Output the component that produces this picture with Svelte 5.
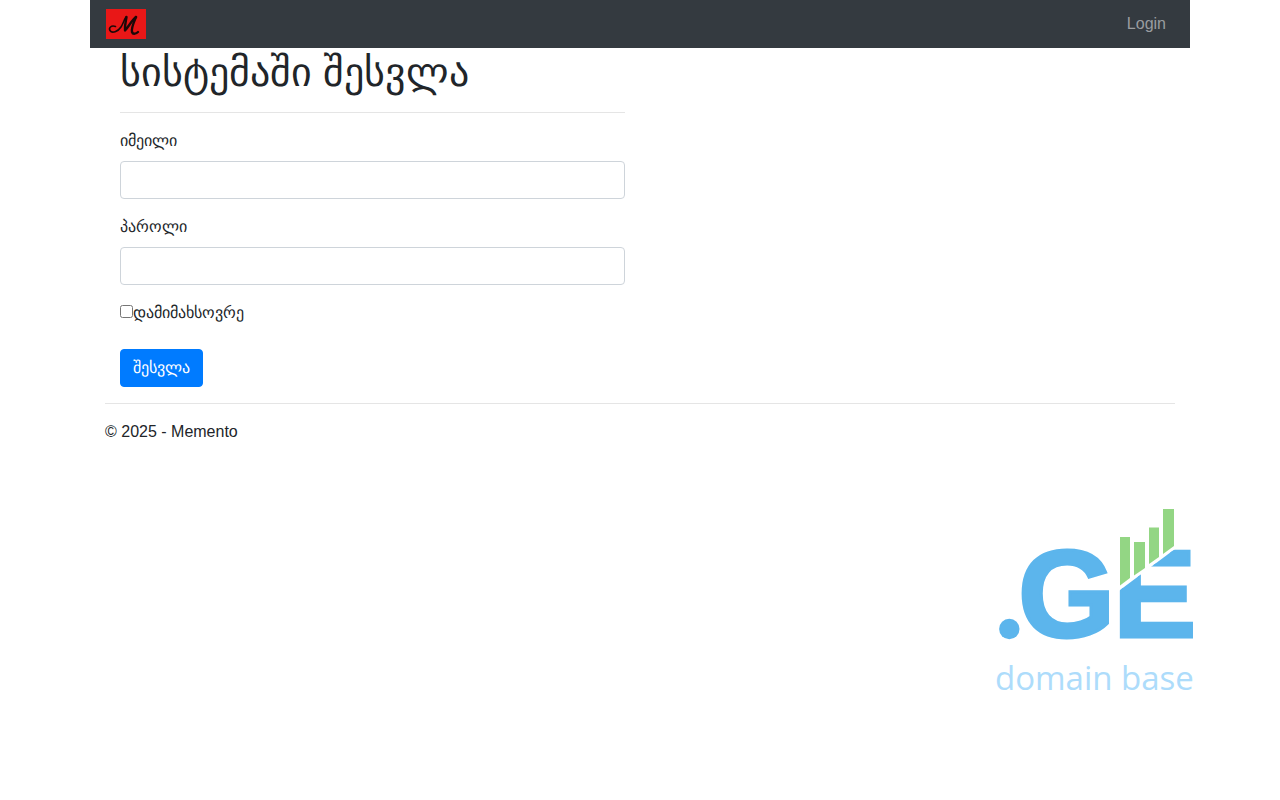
<script>
  let email = '';
  let password = '';
  let remember = false;

  const year = 2025;
</script>

<svelte:head>
  <title>სისტემაში შესვლა - Memento</title>
</svelte:head>

<div class="page">
  <nav class="navbar">
    <a class="brand" href="/" aria-label="Memento">
      <svg width="40" height="30" viewBox="0 0 40 30" aria-hidden="true">
        <rect width="40" height="30" fill="#e91717" />
        <g fill="none" stroke="#1c0808" stroke-linecap="round" stroke-linejoin="round">
          <path d="M9.500 17.500C5 16 2.500 19 4 21.500C6 25 12 22.500 15 18C17 15 18 11 20 8" stroke-width="1.600" />
          <path d="M20.500 8C20 12 18.500 16 19 21.500C23 17 26 11 30 8" stroke-width="2.400" />
          <path d="M30 8C28 13 25 19 26 23C27 26 30.500 24.500 32 23" stroke-width="2.400" />
        </g>
      </svg>
    </a>
    <a class="nav-link" href="/login">Login</a>
  </nav>

  <div class="container">
    <main class="content">
      <h1>სისტემაში შესვლა</h1>
      <hr>
      <form on:submit|preventDefault>
        <div class="form-group">
          <label for="email">იმეილი</label>
          <input id="email" class="form-control" type="email" bind:value={email}>
        </div>
        <div class="form-group">
          <label for="password">პაროლი</label>
          <input id="password" class="form-control" type="password" bind:value={password}>
        </div>
        <div class="form-group">
          <label class="remember"><input type="checkbox" bind:checked={remember}>დამიმახსოვრე</label>
        </div>
        <div class="form-group">
          <button type="submit">შესვლა</button>
        </div>
      </form>
    </main>

    <footer>
      <hr>
      <p>&copy; {year} - Memento</p>
    </footer>
  </div>

  <div class="domain-base">
    <svg width="200" height="200" viewBox="0 0 200 200" role="img" aria-label=".GE domain base">
      <defs>
        <clipPath id="below">
          <path d="M128 91.500L188 46.700H206V150H128Z" />
        </clipPath>
      </defs>
      <circle cx="19.300" cy="129" r="10.200" fill="#5cb5ec" />
      <g class="mark" fill="#5cb5ec" stroke="#5cb5ec" stroke-width="3">
        <text x="28" y="137">G</text>
        <text x="123" y="137" clip-path="url(#below)">E</text>
      </g>
      <g fill="#93d684">
        <path d="M130 37h10v41l-10 7.500z" />
        <path d="M144 42h11v26l-11 7.500z" />
        <path d="M159 27.500h10v29.500l-10 7z" />
        <path d="M173 9h11v37l-11 8z" />
      </g>
      <text class="caption" x="5" y="190" fill="#addcfb">domain base</text>
    </svg>
  </div>
</div>

<style>
  :global(body) {
    margin: 0;
    background: #fff;
    color: #212529;
    font-family: "Liberation Sans", Arial, "Noto Sans", sans-serif;
    font-size: 16px;
    line-height: 24px;
  }
  .page {
    max-width: 1100px;
    margin: 0 auto;
  }
  .navbar {
    display: flex;
    align-items: center;
    justify-content: space-between;
    min-height: 48px;
    padding: 0 16px;
    box-sizing: border-box;
    background: #343a40;
  }
  .brand {
    display: flex;
  }
  .nav-link {
    padding: 8px;
    color: #9a9da0;
    text-decoration: none;
  }
  .nav-link:hover {
    color: #fff;
  }
  .container {
    padding: 0 15px;
  }
  .content {
    width: 50%;
    padding: 0 15px;
    box-sizing: border-box;
  }
  h1 {
    margin: 0 0 8px;
    font-size: 40px;
    font-weight: 500;
    line-height: 48px;
  }
  hr {
    margin: 16px 0;
    border: 0;
    border-top: 1px solid rgba(0, 0, 0, 0.1);
  }
  .form-group {
    margin-bottom: 16px;
  }
  label {
    display: inline-block;
    margin-bottom: 8px;
  }
  .form-control {
    display: block;
    width: 100%;
    height: 38px;
    padding: 6px 12px;
    box-sizing: border-box;
    border: 1px solid #ced4da;
    border-radius: 4px;
    background: #fff;
    color: #495057;
    font: inherit;
  }
  .remember input {
    margin: 0;
  }
  button {
    display: block;
    height: 38px;
    padding: 6px 12px;
    border: 1px solid #007bff;
    border-radius: 4px;
    background: #007bff;
    color: #fff;
    font: inherit;
    cursor: pointer;
  }
  footer p {
    margin: 0;
  }
  .domain-base {
    display: flex;
    justify-content: flex-end;
    margin-top: 56px;
  }
  .domain-base svg {
    overflow: visible;
  }
  .mark {
    font-family: "Liberation Sans", Arial, sans-serif;
    font-size: 125px;
    font-weight: 700;
  }
  .caption {
    font-family: "Open Sans", sans-serif;
    font-size: 33px;
  }
</style>
